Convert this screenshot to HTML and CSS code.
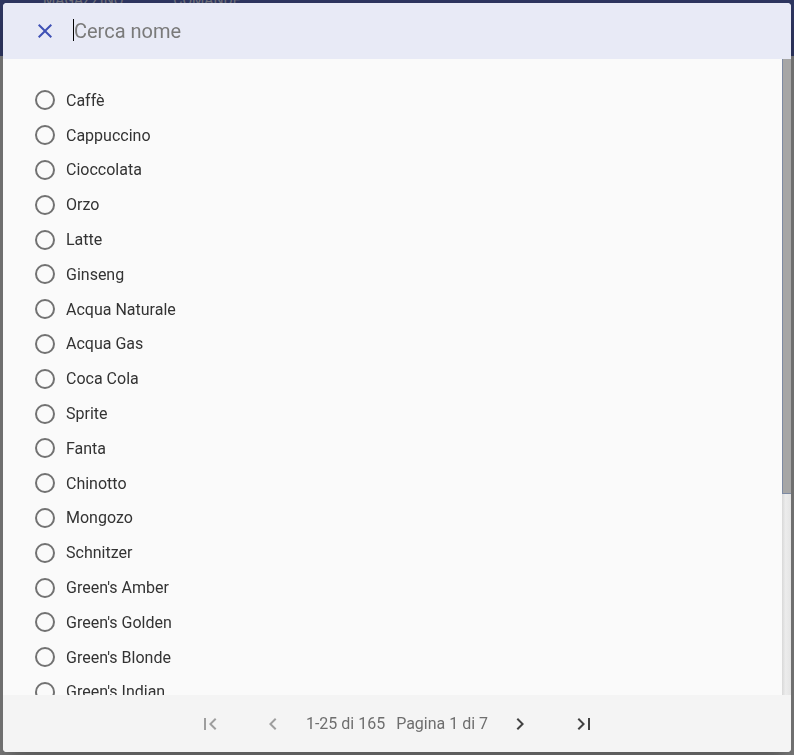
FILE: index.html
```html
<!DOCTYPE html>
<html lang="it">
<head>
    <meta charset="UTF-8">
    <title>Cerca nome</title>
    <link rel="stylesheet" href="styles.css">
</head>
<body>

    <header class="appbar">
        <span class="tab">MAGAZZINO</span>
        <span class="tab">COMANDE</span>
    </header>
    <div class="overlay"></div>

    <section class="dialog">
        <div class="dialog-head">
            <button class="close" aria-label="Chiudi">
                <svg viewBox="0 0 24 24" width="24" height="24"><path d="M19 6.41L17.59 5 12 10.59 6.41 5 5 6.41 10.59 12 5 17.59 6.41 19 12 13.41 17.59 19 19 17.59 13.41 12z"/></svg>
            </button>
            <div class="search">
                <span class="caret"></span>
                <input type="text" placeholder="Cerca nome">
            </div>
        </div>

        <div class="lista-box">
            <ul class="lista">
                <li><span class="radio"></span>Caffè</li>
                <li><span class="radio"></span>Cappuccino</li>
                <li><span class="radio"></span>Cioccolata</li>
                <li><span class="radio"></span>Orzo</li>
                <li><span class="radio"></span>Latte</li>
                <li><span class="radio"></span>Ginseng</li>
                <li><span class="radio"></span>Acqua Naturale</li>
                <li><span class="radio"></span>Acqua Gas</li>
                <li><span class="radio"></span>Coca Cola</li>
                <li><span class="radio"></span>Sprite</li>
                <li><span class="radio"></span>Fanta</li>
                <li><span class="radio"></span>Chinotto</li>
                <li><span class="radio"></span>Mongozo</li>
                <li><span class="radio"></span>Schnitzer</li>
                <li><span class="radio"></span>Green's Amber</li>
                <li><span class="radio"></span>Green's Golden</li>
                <li><span class="radio"></span>Green's Blonde</li>
                <li><span class="radio"></span>Green's Indian</li>
                <li><span class="radio"></span>Green's Tripel</li>
                <li><span class="radio"></span>Green's Dubbel</li>
                <li><span class="radio"></span>Green's Quest</li>
                <li><span class="radio"></span>Green's Discovery</li>
                <li><span class="radio"></span>Moretti</li>
                <li><span class="radio"></span>Ichnusa</li>
                <li><span class="radio"></span>Heineken</li>
            </ul>
            <div class="scrollbar"><div class="thumb"></div></div>
        </div>

        <footer class="paginatore">
            <button class="pag-btn off first" aria-label="Prima pagina">
                <svg viewBox="0 0 24 24" width="24" height="24"><path d="M18.41 16.59L13.82 12l4.59-4.59L17 6l-6 6 6 6zM6 6h2v12H6z"/></svg>
            </button>
            <button class="pag-btn off prev" aria-label="Pagina precedente">
                <svg viewBox="0 0 24 24" width="24" height="24"><path d="M15.41 7.41L14 6l-6 6 6 6 1.41-1.41L10.83 12z"/></svg>
            </button>
            <span class="pag-info">1-25 di 165</span>
            <span class="pag-info pagina">Pagina 1 di 7</span>
            <button class="pag-btn next" aria-label="Pagina successiva">
                <svg viewBox="0 0 24 24" width="24" height="24"><path d="M10 6L8.59 7.41 13.17 12l-4.58 4.59L10 18l6-6z"/></svg>
            </button>
            <button class="pag-btn last" aria-label="Ultima pagina">
                <svg viewBox="0 0 24 24" width="24" height="24"><path d="M5.59 7.41L10.18 12l-4.59 4.59L7 18l6-6-6-6zM16 6h2v12h-2z"/></svg>
            </button>
        </footer>
    </section>

</body>
</html>
```

FILE: styles.css
```css
        html, body {
            margin: 0;
            height: 100%;
        }

        body {
            background-color: #f5f5f5;
            font-family: Roboto, "Liberation Sans", sans-serif;
            overflow: hidden;
        }

        .appbar {
            height: 56px;
            background-color: #5c6bc0;
            display: flex;
            gap: 50px;
            padding-left: 43px;
        }

        .tab {
            color: #dfe1f2;
            font-size: 14px;
            margin-top: -8px;
        }

        .overlay {
            position: fixed;
            inset: 0;
            background-color: rgba(0, 0, 0, .5);
        }

        /* finestra di ricerca */
        .dialog {
            position: fixed;
            inset: 3px;
            display: flex;
            flex-direction: column;
            background-color: #fafafa;
            border-radius: 4px;
            overflow: hidden;
            box-shadow: 0 11px 15px -7px rgba(0, 0, 0, .2), 0 24px 38px 3px rgba(0, 0, 0, .14);
        }

        .dialog-head {
            height: 56px;
            flex: none;
            background-color: #e8eaf6;
            display: flex;
            align-items: center;
        }

        .close {
            width: 24px;
            height: 24px;
            margin-left: 30px;
            padding: 0;
            border: none;
            background: none;
            fill: #3f51b5;
        }

        .close svg {
            display: block;
        }

        .search {
            position: relative;
            margin-left: 16px;
            flex: 1;
        }

        .search input {
            width: 100%;
            border: none;
            outline: none;
            background: transparent;
            padding: 0 0 0 1px;
            font-family: Roboto, "Liberation Sans", sans-serif;
            font-size: 20px;
            color: #212121;
        }

        .search input::placeholder {
            color: #7a7a7a;
        }

        .caret {
            position: absolute;
            left: 0;
            top: 0;
            width: 1px;
            height: 22px;
            background-color: #000;
        }

        .lista-box {
            flex: 1;
            position: relative;
            overflow: hidden;
        }

        .lista {
            margin: 0;
            padding: 24px 0 40px;
            list-style: none;
        }

        .lista li {
            height: 34.8px;
            display: flex;
            align-items: center;
            padding-left: 32px;
            font-size: 16px;
            color: #333;
        }

        .radio {
            width: 16px;
            height: 16px;
            border: 2px solid #727272;
            border-radius: 50%;
            margin-right: 11px;
        }

        /* barra di scorrimento disegnata sopra la lista */
        .scrollbar {
            position: absolute;
            top: 0;
            right: 0;
            bottom: 0;
            width: 9px;
            background: linear-gradient(to right, #d8d8d8, #ececec 40%, #e4e4e4);
        }

        .thumb {
            height: 435px;
            background-color: #a6a6a6;
            border-left: 1px solid #7d8aa3;
            border-bottom: 1px solid #7d8aa3;
            box-sizing: border-box;
        }

        .paginatore {
            height: 57px;
            flex: none;
            background-color: #f4f4f4;
            display: flex;
            align-items: center;
            justify-content: center;
        }

        .pag-btn {
            width: 24px;
            height: 24px;
            padding: 0;
            border: none;
            background: none;
            fill: #424242;
        }

        .pag-btn svg {
            display: block;
        }

        .pag-btn.off {
            fill: #9e9e9e;
        }

        .prev {
            margin-left: 39px;
        }

        .pag-info {
            font-size: 16px;
            color: #6e6e6e;
        }

        .prev + .pag-info {
            margin-left: 21px;
        }

        .pagina {
            margin-left: 11px;
        }

        .next {
            margin-left: 20px;
        }

        .last {
            margin-left: 40px;
        }
```
